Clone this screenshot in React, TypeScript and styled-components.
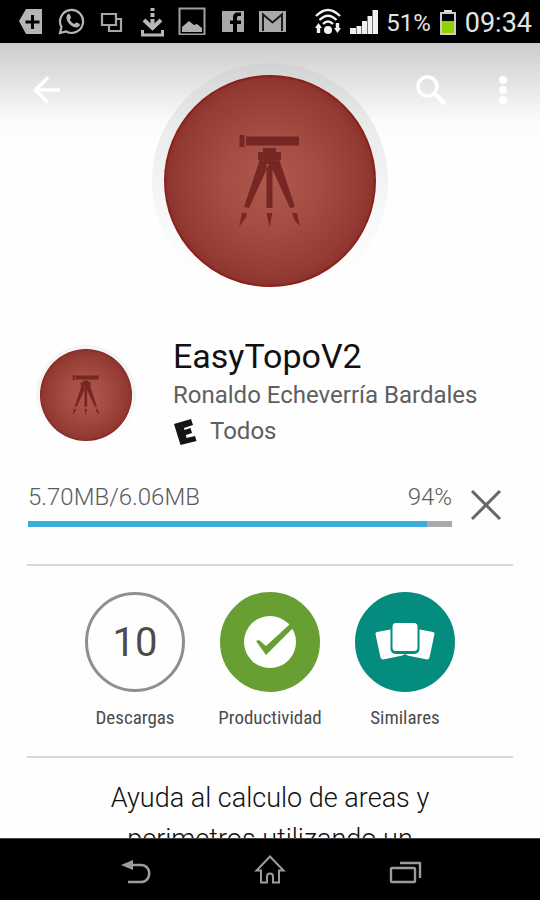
import React from "react";
import styled, { createGlobalStyle } from "styled-components";

const GlobalStyle = createGlobalStyle`
  * { box-sizing: border-box; }
  body {
    margin: 0;
    background: #fff;
    font-family: Roboto, "Liberation Sans", sans-serif;
  }
  h1, p { margin: 0; font-weight: 400; }
`;

const Screen = styled.div`
  display: flex;
  flex-direction: column;
  height: 100vh;
  background: #fefefe;
`;

const StatusBar = styled.header`
  display: flex;
  align-items: center;
  justify-content: space-between;
  flex: none;
  height: 43px;
  padding: 0 8px 0 18px;
  background: #000;
  color: #e4e4e4;
`;

const Notifications = styled.div`
  display: flex;
  gap: 12px;
`;

const SystemInfo = styled.div`
  display: flex;
  align-items: center;
  gap: 8px;
`;

const Glyph = styled.svg`
  display: block;
  flex: none;
`;

const StatusText = styled.span<{ $size: number }>`
  font-size: ${(p) => p.$size}px;
  line-height: 28px;
  padding-top: 2px;
`;

const Content = styled.main`
  flex: 1;
  min-height: 0;
  overflow-y: auto;
  scrollbar-width: none;
`;

const Hero = styled.section`
  position: relative;
  display: flex;
  justify-content: center;
  padding-top: 20px;
  background: linear-gradient(#cdcdcd 0, #dedede 30px, #fafafa 76px, #fefefe 96px) no-repeat;
`;

const AppBar = styled.div`
  position: absolute;
  top: 23px;
  left: 0;
  right: 0;
  display: flex;
  align-items: center;
  justify-content: space-between;
  padding: 0 13px 0 23px;
`;

const IconButton = styled.button`
  display: grid;
  place-items: center;
  width: 48px;
  height: 48px;
  padding: 0;
  border: 0;
  background: none;
  color: #fff;
  cursor: pointer;
`;

const AppBarActions = styled.div`
  display: flex;
  gap: 24px;
`;

const Halo = styled.div<{ $ring: number; $size: number; $tint: string }>`
  flex: none;
  width: ${(p) => p.$size}px;
  height: ${(p) => p.$size}px;
  padding: ${(p) => p.$ring}px;
  border-radius: 50%;
  background: linear-gradient(${(p) => p.$tint}, rgba(240, 242, 242, 0.7) 55%, rgba(255, 255, 255, 0) 90%);
`;

const Disc = styled.div`
  display: grid;
  place-items: center;
  height: 100%;
  border-radius: 50%;
  background: radial-gradient(circle closest-side, #ae584d 0, #a54d43 45%, #943c34 88%, #8c352e 97%, #8b1713 100%);
`;

const Info = styled.section`
  display: flex;
  gap: 37px;
  padding: 36px 28px 0 36px;
`;

const Thumb = styled.div`
  padding-top: 10px;
`;

const Details = styled.div`
  min-width: 0;
  color: #5f5f5f;
`;

const Title = styled.h1`
  font-size: 34px;
  line-height: 42px;
  color: #111;
`;

const Meta = styled.p`
  display: flex;
  align-items: center;
  gap: 10px;
  font-size: 24px;
  line-height: 36px;
`;

const Download = styled.section`
  display: flex;
  align-items: center;
  gap: 10px;
  padding: 34px 30px 37px 28px;
`;

const DownloadBody = styled.div`
  flex: 1;
`;

const DownloadLabel = styled.label`
  display: flex;
  justify-content: space-between;
  margin-bottom: 10px;
  font-size: 24px;
  font-weight: 300;
  line-height: 28px;
  color: #5c5c5c;
`;

const Bar = styled.progress`
  display: block;
  width: 100%;
  height: 6px;
  border: 0;
  appearance: none;
  background: #aaa;
  &::-webkit-progress-bar { background: #aaa; }
  &::-webkit-progress-value { background: #3cacdb; }
`;

const CancelButton = styled(IconButton)`
  height: 44px;
  color: #666;
`;

const Divider = styled.hr`
  height: 2px;
  margin: 0 27px;
  border: 0;
  background: #d6d6d6;
`;

const Stats = styled.section`
  display: grid;
  grid-template-columns: repeat(3, 25%);
  justify-content: center;
  padding: 26px 0;
`;

const Stat = styled.a`
  display: flex;
  flex-direction: column;
  align-items: center;
  gap: 14px;
  font-family: "Roboto Condensed", Roboto, sans-serif;
  font-size: 19px;
  line-height: 24px;
  color: #4c4c4c;
  text-decoration: none;
`;

const Badge = styled.span<{ $fill: string; $edge: string }>`
  display: grid;
  place-items: center;
  width: 100px;
  height: 100px;
  border: 3px solid ${(p) => p.$edge};
  border-radius: 50%;
  background: ${(p) => p.$fill};
`;

const Count = styled.span`
  padding-top: 2px;
  font-family: Roboto, sans-serif;
  font-size: 40px;
  line-height: 48px;
`;

const Description = styled.p`
  max-width: 380px;
  margin: 0 auto;
  padding: 20px 20px 0;
  font-size: 27px;
  font-weight: 300;
  line-height: 41px;
  text-align: center;
  color: #111;
`;

const NavBar = styled.nav`
  display: grid;
  grid-template-columns: repeat(3, 25%);
  justify-content: center;
  justify-items: center;
  align-items: center;
  flex: none;
  height: 62px;
  border-top: 1px solid #444;
  background: #000;
`;

const NavButton = styled(IconButton)`
  color: #9c9c9c;
`;

const Tripod = ({ size }: { size: number }) => (
  <Glyph width={size} height={size} viewBox="0 0 96 96" fill="#762723" aria-hidden="true">
    <path d="M17.500 2h5v12h-5zM24 3.500h53v9H24z" />
    <path d="M41 15h13v4h5v8h-5l-3 4H44l-3-4h-5v-8h5z" />
    <path d="M38 26 22 74l5 1 20-44zM57 26l16 48-5 1-20-44zM44.500 29h6v46h-6z" />
    <path d="M20 80h5l-1 4-7 10zM44.500 80h6l-3 14zM70 80h5l3 13-5-5z" />
  </Glyph>
);

const TagIcon = () => (
  <Glyph width="28" height="28" viewBox="0 0 28 28" aria-hidden="true">
    <path d="M1 14 8 2h16v25H8z" fill="#b5b5b5" />
    <path d="M14.500 8v14M7.500 15h14" stroke="#000" strokeWidth="3" />
  </Glyph>
);

const WhatsAppIcon = () => (
  <Glyph width="28" height="28" viewBox="0 0 28 28" aria-hidden="true">
    <path d="M3.500 20a11.500 11.500 0 1 1 4.500 4.500L2 26z" fill="none" stroke="#b5b5b5" strokeWidth="2.200" />
    <path d="M9.500 7.500c1-1 2-.8 2.500.3l1 2.400c.3.800-1 1.800-1.200 2.500 1 2 2.400 3.200 4.600 4.200.8-.3 1.600-1.700 2.400-1.400l2.500 1.200c1 .5.500 2-.4 2.900-2.300 2-6 .6-8.700-1.800C9.500 15.300 7 10.500 9.500 7.500z" fill="#b5b5b5" />
  </Glyph>
);

const CopyIcon = () => (
  <Glyph width="28" height="28" viewBox="0 0 28 28" fill="none" stroke="#a6a6a6" strokeWidth="2.200" aria-hidden="true">
    <path d="M4 7h14v11H4z" />
    <path d="M18 12h5v12H11v-6" />
  </Glyph>
);

const DownloadIcon = () => (
  <Glyph width="28" height="30" viewBox="0 0 28 30" fill="none" stroke="#b8b8b8" aria-hidden="true">
    <path d="M14.500 1v3M14.500 6v4M14.500 12v10" strokeWidth="4" />
    <path d="m6 13 8.500 8L23 13" strokeWidth="4" />
    <path d="M4.500 23v5h20v-5" strokeWidth="3" />
  </Glyph>
);

const PictureIcon = () => (
  <Glyph width="28" height="28" viewBox="0 0 28 28" aria-hidden="true">
    <path d="M1.500 1.500h25v26h-25z" fill="none" stroke="#a0a0a0" strokeWidth="2" />
    <path d="M4 25v-5l7-6 5 4 3-1 5 4v4z" fill="#b0b0b0" />
  </Glyph>
);

const FacebookIcon = () => (
  <Glyph width="28" height="28" viewBox="0 0 28 28" aria-hidden="true">
    <path d="M4 4h22v21H4z" fill="#a9a9a9" />
    <path d="M19 25v-8h4v-3.500h-4V11c0-1.500.6-2 2-2h2V5.500h-3c-3.500 0-5 2-5 5v3h-3V17h3v8z" fill="#000" />
  </Glyph>
);

const MailIcon = () => (
  <Glyph width="28" height="28" viewBox="0 0 28 28" aria-hidden="true">
    <path d="M1 4h27v21H1z" fill="#a9a9a9" />
    <path d="M5 24V7.500l9.500 8 9.500-8V24" fill="none" stroke="#1c1c1c" strokeWidth="2" />
  </Glyph>
);

const WifiIcon = () => (
  <Glyph width="28" height="28" viewBox="0 0 28 28" fill="none" stroke="#f2f2f2" strokeWidth="2.400" aria-hidden="true">
    <path d="M2 8q12-12 24 0M5.500 12q8.500-8.500 17 0M9 16q5-5 10 0" />
    <circle cx="14" cy="22" r="4" fill="#f2f2f2" stroke="none" />
    <path d="m1 20 3.500-5L8 20H6.200v5H2.800v-5zM20 20l3.500 5 3.500-5h-1.800v-5h-3.400v5z" fill="#f2f2f2" stroke="none" />
  </Glyph>
);

const SignalIcon = () => (
  <Glyph width="28" height="28" viewBox="0 0 28 28" fill="#f0f0f0" aria-hidden="true">
    <path d="M0 20h6v6H0zM6.500 18h5v8h-5zM12 13h5v13h-5zM17.500 8h4.500v18h-4.500zM22.500 2H28v24h-5.500z" />
  </Glyph>
);

const BatteryIcon = () => (
  <Glyph width="18" height="28" viewBox="0 0 18 28" aria-hidden="true">
    <path d="M5 2h8v3H5z" fill="#ddd" />
    <path d="M2 5h14v21H2z" fill="#000" stroke="#ccc" strokeWidth="2" />
    <path d="M3 13h12v12H3z" fill="#8fd400" />
  </Glyph>
);

const BackArrow = () => (
  <Glyph width="28" height="28" viewBox="0 0 28 28" fill="none" stroke="currentColor" strokeWidth="3.500" aria-hidden="true">
    <path d="M27 14H3M15 1.500 2.500 14 15 26.500" />
  </Glyph>
);

const SearchIcon = () => (
  <Glyph width="30" height="30" viewBox="0 0 30 30" fill="none" stroke="currentColor" aria-hidden="true">
    <circle cx="11.500" cy="11.500" r="9.500" strokeWidth="3.400" />
    <path d="m18 18 11 11" strokeWidth="4.200" />
  </Glyph>
);

const MoreIcon = () => (
  <Glyph width="10" height="28" viewBox="0 0 10 28" fill="currentColor" aria-hidden="true">
    <circle cx="5" cy="4" r="4" />
    <circle cx="5" cy="14" r="4" />
    <circle cx="5" cy="24" r="4" />
  </Glyph>
);

const RatingIcon = () => (
  <Glyph width="27" height="27" viewBox="0 0 27 27" fill="#151515" aria-hidden="true">
    <path d="M1 6 18 1l2 6-9 3 .5 2 6-2 1.500 5-6 2 .5 3 8.500-2 1.500 5-16 4z" />
  </Glyph>
);

const CloseIcon = () => (
  <Glyph width="32" height="32" viewBox="0 0 32 32" fill="none" stroke="currentColor" strokeWidth="3" aria-hidden="true">
    <path d="m2 2 28 28M30 2 2 30" />
  </Glyph>
);

const CheckIcon = () => (
  <Glyph width="56" height="56" viewBox="0 0 56 56" aria-hidden="true">
    <circle cx="28" cy="28" r="26" fill="#fff" />
    <path d="m14 27 3-1 7 6L48 10l3 4-27 27z" fill="#689f33" />
  </Glyph>
);

const CardsIcon = () => (
  <Glyph width="60" height="42" viewBox="0 0 60 42" fill="#fff" aria-hidden="true">
    <path d="M2 11 18 8l12 26L8 38.500q-2 0-2.500-2L.5 13q-.2-1.600 1.500-2zM58 11 42 8 30 34l22 4.500q2 0 2.500-2l5-23.500q.2-1.600-1.500-2z" />
    <rect x="15.500" y="0" width="29" height="33" rx="5" fill="#048d7e" />
    <path d="m30 33 3 2h-6z" fill="#048d7e" />
    <rect x="17.500" y="2" width="25" height="28" rx="3.500" />
  </Glyph>
);

const NavBackIcon = () => (
  <Glyph width="36" height="36" viewBox="0 0 36 36" fill="none" stroke="currentColor" strokeWidth="2.600" aria-hidden="true">
    <path d="M14 13h10c11 0 11 17 0 17H11" />
    <path d="m4 13 12-5v10z" fill="currentColor" stroke="none" />
  </Glyph>
);

const HomeIcon = () => (
  <Glyph width="36" height="36" viewBox="0 0 36 36" fill="none" stroke="currentColor" strokeWidth="2" aria-hidden="true">
    <path d="M18 4.500 4.500 18.500H9v12h6v-6q0-3 3-3t3 3v6h6v-12h4.500z" />
  </Glyph>
);

const RecentsIcon = () => (
  <Glyph width="36" height="36" viewBox="0 0 36 36" fill="none" stroke="currentColor" strokeWidth="2.400" aria-hidden="true">
    <rect x="4" y="16" width="24" height="14" rx="1" />
    <path d="M13 11h20v15" />
  </Glyph>
);

export default function App() {
  return (
    <Screen>
      <GlobalStyle />
      <StatusBar>
        <Notifications>
          <TagIcon />
          <WhatsAppIcon />
          <CopyIcon />
          <DownloadIcon />
          <PictureIcon />
          <FacebookIcon />
          <MailIcon />
        </Notifications>
        <SystemInfo>
          <WifiIcon />
          <SignalIcon />
          <StatusText $size={24}>51%</StatusText>
          <BatteryIcon />
          <StatusText $size={27}>09:34</StatusText>
        </SystemInfo>
      </StatusBar>

      <Content>
        <Hero>
          <Halo $size={236} $ring={12} $tint="rgba(205, 208, 208, 0.6)">
            <Disc><Tripod size={96} /></Disc>
          </Halo>
          <AppBar>
            <IconButton aria-label="Atrás"><BackArrow /></IconButton>
            <AppBarActions>
              <IconButton aria-label="Buscar"><SearchIcon /></IconButton>
              <IconButton aria-label="Más opciones"><MoreIcon /></IconButton>
            </AppBarActions>
          </AppBar>
        </Hero>

        <Info>
          <Thumb>
            <Halo $size={100} $ring={4} $tint="#f3f5f5">
              <Disc><Tripod size={42} /></Disc>
            </Halo>
          </Thumb>
          <Details>
            <Title>EasyTopoV2</Title>
            <Meta>Ronaldo Echeverría Bardales</Meta>
            <Meta><RatingIcon />Todos</Meta>
          </Details>
        </Info>

        <Download>
          <DownloadBody>
            <DownloadLabel htmlFor="download-progress">
              <span>5.70MB/6.06MB</span>
              <span>94%</span>
            </DownloadLabel>
            <Bar id="download-progress" value={94} max={100} />
          </DownloadBody>
          <CancelButton aria-label="Cancelar descarga"><CloseIcon /></CancelButton>
        </Download>

        <Divider />
        <Stats>
          <Stat href="#descargas">
            <Badge $fill="transparent" $edge="#8f8f8f"><Count>10</Count></Badge>
            Descargas
          </Stat>
          <Stat href="#productividad">
            <Badge $fill="#689f33" $edge="#689f33"><CheckIcon /></Badge>
            Productividad
          </Stat>
          <Stat href="#similares">
            <Badge $fill="#048d7e" $edge="#048d7e"><CardsIcon /></Badge>
            Similares
          </Stat>
        </Stats>
        <Divider />
        <Description>Ayuda al calculo de areas y perimetros utilizando un</Description>
      </Content>

      <NavBar>
        <NavButton aria-label="Volver"><NavBackIcon /></NavButton>
        <NavButton aria-label="Inicio"><HomeIcon /></NavButton>
        <NavButton aria-label="Recientes"><RecentsIcon /></NavButton>
      </NavBar>
    </Screen>
  );
}
